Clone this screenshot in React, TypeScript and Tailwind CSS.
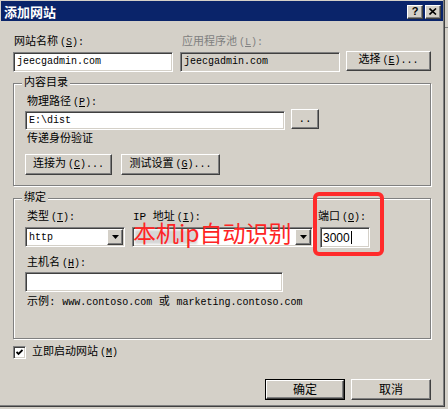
const mono = "font-['Liberation_Mono','Noto_Sans_CJK_SC',monospace]";
const cjk = "font-['Noto_Sans_CJK_SC',sans-serif]";

const sunken =
  "border border-t-[#808080] border-l-[#808080] border-r-white border-b-white shadow-[inset_1px_1px_0_#404040,inset_-1px_-1px_0_#d4d0c8]";
const raised =
  "border border-t-white border-l-white border-r-[#404040] border-b-[#404040] shadow-[inset_-1px_-1px_0_#808080]";
const etched =
  "border border-[#808080] shadow-[1px_1px_0_#fff,inset_1px_1px_0_#fff]";

function Acc({ k, tail = "" }: { k: string; tail?: string }) {
  return (
    <span className="ml-[2px] text-[10px]">
      (<span className="underline">{k}</span>){tail}
    </span>
  );
}

function Label({ text, k, disabled }: { text: string; k: string; disabled?: boolean }) {
  return (
    <span className={`whitespace-pre leading-[14px] ${disabled ? "text-[#808080]" : "text-black"}`}>
      {text}
      <Acc k={k} tail=":" />
    </span>
  );
}

function Button({
  children,
  className = "",
  primary,
}: {
  children: React.ReactNode;
  className?: string;
  primary?: boolean;
}) {
  if (primary) {
    return (
      <div className={`border border-black ${className}`}>
        <div className={`flex h-full w-full items-center justify-center ${raised}`}>{children}</div>
      </div>
    );
  }
  return <div className={`flex items-center justify-center ${raised} ${className}`}>{children}</div>;
}

function DropArrow() {
  return (
    <div className={`flex h-[16px] w-[16px] items-center justify-center bg-[#d4d0c8] ${raised}`}>
      <svg width="7" height="4" viewBox="0 0 7 4">
        <path d="M0 0H7L3.5 4Z" fill="#000" />
      </svg>
    </div>
  );
}

function Group({ title, className, children }: { title: string; className: string; children: React.ReactNode }) {
  return (
    <div className={`relative ${etched} ${className}`}>
      <span className="absolute -top-[8px] left-[8px] bg-[#d4d0c8] px-[2px] leading-[14px]">{title}</span>
      {children}
    </div>
  );
}

export default function App() {
  return (
    <div className={`relative h-[409px] w-[448px] overflow-hidden bg-[#d4d0c8] text-[11px] text-black ${mono}`}>
      <div className="relative h-[407px] w-[445px] border-r border-b border-[#404040] pl-[1px] pt-[1px] shadow-[inset_-1px_-1px_0_#808080]">
        {/* title bar */}
        <div className="flex h-[20px] w-[442px] items-center bg-[#0a246a] pl-[3px] pr-[2px]">
          <span className={`text-[13px] font-bold leading-none text-white ${cjk}`}>添加网站</span>
          <div className="ml-auto flex gap-[2px] pt-[1px]">
            <div className={`flex h-[14px] w-[16px] items-center justify-center bg-[#d4d0c8] ${raised}`}>
              <span className="font-['Liberation_Sans',sans-serif] text-[11px] font-bold leading-none">?</span>
            </div>
            <div className={`flex h-[14px] w-[16px] items-center justify-center bg-[#d4d0c8] ${raised}`}>
              <svg width="8" height="7" viewBox="0 0 8 7">
                <path d="M0.5 0.5L7 6.5M7 0.5L0.5 6.5" stroke="#000" strokeWidth="1.6" />
              </svg>
            </div>
          </div>
        </div>

        <div className="pl-[12px] pt-[13px]">
          {/* site name / app pool */}
          <div className="flex">
            <div className="w-[167px] pl-[1px]">
              <Label text="网站名称" k="S" />
            </div>
            <div className="pl-[2px]">
              <Label text="应用程序池" k="L" disabled />
            </div>
          </div>
          <div className="mt-[1px] flex items-start">
            <div className={`flex h-[20px] w-[160px] items-center bg-white pl-[3px] text-[10px] ${sunken}`}>
              jeecgadmin.com
            </div>
            <div className={`ml-[7px] flex h-[20px] w-[160px] items-center bg-[#d4d0c8] pl-[3px] text-[10px] ${sunken}`}>
              jeecgadmin.com
            </div>
            <Button className="-mt-[1px] ml-[6px] h-[20px] w-[85px]">
              <span className="whitespace-pre">
                选择
                <Acc k="E" tail="..." />
              </span>
            </Button>
          </div>

          {/* content directory */}
          <Group title="内容目录" className="mt-[11px] h-[103px] w-[418px] pl-[11px] pt-[10px]">
            <div className="pl-[2px]">
              <Label text="物理路径" k="P" />
            </div>
            <div className="-mt-[1px] flex h-[21px] items-start">
              <div className={`mt-[2px] flex h-[19px] w-[260px] items-center bg-white pl-[3px] text-[10px] ${sunken}`}>
                E:\dist
              </div>
              <Button className="ml-[6px] h-[20px] w-[28px]">
                <span className="leading-none">..</span>
              </Button>
            </div>
            <div className="mt-[2px] pl-[2px] leading-[14px]">传递身份验证</div>
            <div className="mt-[8px] flex gap-[9px]">
              <Button className="h-[21px] w-[87px]">
                <span className="whitespace-pre">
                  连接为
                  <Acc k="C" tail="..." />
                </span>
              </Button>
              <Button className="h-[21px] w-[99px]">
                <span className="whitespace-pre">
                  测试设置
                  <Acc k="G" tail="..." />
                </span>
              </Button>
            </div>
          </Group>

          {/* binding */}
          <Group title="绑定" className="mt-[12px] h-[141px] w-[418px] pl-[11px] pt-[10px]">
            <div className="flex">
              <div className="w-[107px] pl-[2px]">
                <Label text="类型" k="T" />
              </div>
              <div className="w-[187px] pl-[1px]">
                <Label text="IP 地址" k="I" />
              </div>
              <div className="-ml-[1px]">
                <Label text="端口" k="O" />
              </div>
            </div>
            <div className="mt-[2px] flex items-start">
              <div className={`flex h-[20px] w-[100px] items-center justify-between bg-white pl-[3px] pr-[1px] text-[10px] ${sunken}`}>
                <span>http</span>
                <DropArrow />
              </div>
              <div className={`ml-[7px] flex h-[20px] w-[181px] items-center justify-between bg-white pl-[2px] pr-[1px] ${sunken}`}>
                <div className="h-[14px] w-[62px] bg-[#d6d6d6] blur-[1px]" />
                <DropArrow />
              </div>
              <div className={`ml-[7px] flex h-[21px] w-[50px] items-center bg-white pl-[2px] font-['Liberation_Sans',sans-serif] text-[12px] ${sunken}`}>
                3000
                <span className="ml-[1px] h-[13px] w-[1px] bg-black" />
              </div>
            </div>
            <div className="mt-[7px] pl-[2px]">
              <Label text="主机名" k="H" />
            </div>
            <div className={`h-[20px] w-[258px] bg-white ${sunken}`} />
            <div className="mt-[3px] whitespace-pre pl-[2px] leading-[14px]">
              示例: <span className="text-[10px]">www.contoso.com</span> 或{" "}
              <span className="text-[10px]">marketing.contoso.com</span>
            </div>
          </Group>

          {/* start checkbox */}
          <div className="mt-[6px] flex items-center gap-[6px]">
            <div className={`flex h-[13px] w-[13px] items-center justify-center bg-white ${sunken}`}>
              <svg width="7" height="7" viewBox="0 0 7 7">
                <path d="M0.5 3L2.5 5L6.5 1" stroke="#000" strokeWidth="1.8" fill="none" />
              </svg>
            </div>
            <span className="whitespace-pre leading-[14px]">
              立即启动网站
              <Acc k="M" />
            </span>
          </div>

          {/* dialog buttons */}
          <div className="mt-[19px] flex w-[418px] justify-end gap-[6px]">
            <Button primary className="h-[21px] w-[80px]">
              <span className={`text-[12px] ${cjk}`}>确定</span>
            </Button>
            <Button className="h-[21px] w-[80px]">
              <span className={`text-[12px] ${cjk}`}>取消</span>
            </Button>
          </div>
        </div>
      </div>

      {/* window behind, at the right edge */}
      <div className="absolute left-[445px] top-[27px] h-[1px] w-[3px] bg-[#808080]" />

      {/* red annotation */}
      <div className="absolute left-[313px] top-[192px] h-[64px] w-[71px] rounded-[6px] border-[4px] border-[#ff2b2b]" />
      <div className={`absolute left-[133px] top-[221px] text-[23px] leading-none text-[#ff2424] ${cjk}`}>
        本机ip自动识别
      </div>
    </div>
  );
}
